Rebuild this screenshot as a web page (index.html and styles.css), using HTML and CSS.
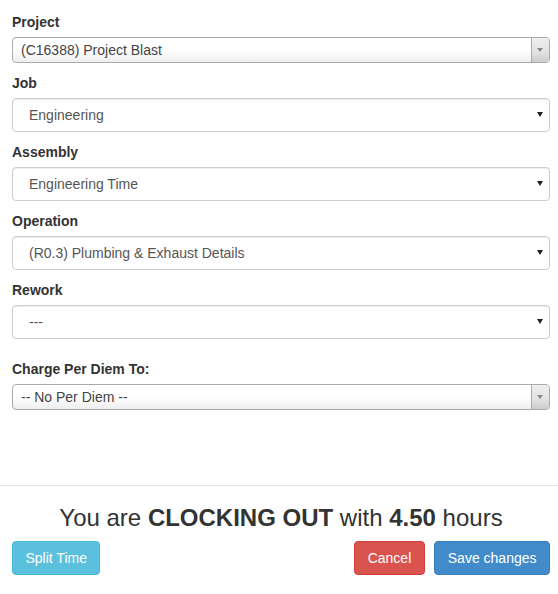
FILE: index.html
```html
<!doctype html>
<html lang="en">
  <head>
    <meta charset="utf-8">
    <title>Clock Out</title>
    <link rel="stylesheet" href="styles.css">
  </head>
  <body>
    <div class="modal-body">
      <form>
        <div class="form-group">
          <label>Project</label>
          <div class="select2">
            <span class="select2-text">(C16388) Project Blast</span>
            <span class="select2-arrow"></span>
          </div>
        </div>
        <div class="form-group">
          <label for="job">Job</label>
          <div class="select-wrap">
            <select id="job" class="form-control"><option>Engineering</option></select>
          </div>
        </div>
        <div class="form-group">
          <label for="assembly">Assembly</label>
          <div class="select-wrap">
            <select id="assembly" class="form-control"><option>Engineering Time</option></select>
          </div>
        </div>
        <div class="form-group">
          <label for="operation">Operation</label>
          <div class="select-wrap">
            <select id="operation" class="form-control"><option>(R0.3) Plumbing &amp; Exhaust Details</option></select>
          </div>
        </div>
        <div class="form-group">
          <label for="rework">Rework</label>
          <div class="select-wrap">
            <select id="rework" class="form-control"><option>---</option></select>
          </div>
        </div>
        <div class="form-group per-diem">
          <label>Charge Per Diem To:</label>
          <div class="select2">
            <span class="select2-text">-- No Per Diem --</span>
            <span class="select2-arrow"></span>
          </div>
        </div>
      </form>
    </div>
    <div class="modal-footer">
      <h3>You are <strong>CLOCKING OUT</strong> with <strong>4.50</strong> hours</h3>
      <div class="actions">
        <button class="btn btn-info">Split Time</button>
        <div class="actions-right">
          <button class="btn btn-danger">Cancel</button>
          <button class="btn btn-primary">Save changes</button>
        </div>
      </div>
    </div>
  </body>
</html>
```

FILE: styles.css
```css
* {
  box-sizing: border-box;
}

body {
  margin: 0;
  font-family: "Liberation Sans", Arial, sans-serif;
  font-size: 14px;
  line-height: 20px;
  color: #333;
  background: #fff;
}

.modal-body {
  padding: 12px 8px 65px 12px;
}

form {
  margin: 0;
}

.form-group {
  margin-bottom: 10px;
}

.form-group.per-diem {
  margin-top: 20px;
}

.form-group label {
  display: block;
  font-weight: bold;
  margin-bottom: 5px;
}

/* select2 look */
.select2 {
  display: flex;
  height: 26px;
  border: 1px solid #aaa;
  border-radius: 4px;
  background: linear-gradient(to bottom, #fff 0%, #fff 50%, #eee 100%);
  color: #444;
  line-height: 24px;
  overflow: hidden;
}

.select2-text {
  flex: 1;
  padding-left: 8px;
}

.select2-arrow {
  position: relative;
  width: 18px;
  border-left: 1px solid #aaa;
  background: linear-gradient(to bottom, #eee 0%, #e2e2e2 60%, #ccc 100%);
}

.select2-arrow::after {
  content: "";
  position: absolute;
  left: 5px;
  top: 10px;
  border-left: 3px solid transparent;
  border-right: 3px solid transparent;
  border-top: 4px solid #888;
}

/* native select */
.select-wrap {
  position: relative;
}

.select-wrap::after {
  content: "";
  position: absolute;
  right: 7px;
  top: 14px;
  border-left: 3px solid transparent;
  border-right: 3px solid transparent;
  border-top: 5px solid #222;
  pointer-events: none;
}

.form-control {
  display: block;
  width: 100%;
  height: 34px;
  padding: 6px 16px;
  font-family: inherit;
  font-size: 14px;
  line-height: 20px;
  color: #555;
  background: #fff;
  border: 1px solid #ccc;
  border-radius: 4px;
  box-shadow: inset 0 1px 1px rgba(0, 0, 0, .075);
  appearance: none;
  -webkit-appearance: none;
}

/* footer */
.modal-footer {
  border-top: 1px solid #e5e5e5;
  padding: 19px 8px 19px 12px;
}

.modal-footer h3 {
  margin: 0 0 10px;
  font-size: 24px;
  font-weight: normal;
  line-height: 26px;
  text-align: center;
  color: #333;
}

.actions {
  display: flex;
  justify-content: space-between;
}

.actions-right {
  display: flex;
  gap: 9px;
}

.btn {
  height: 34px;
  padding: 6px 12.5px;
  font-family: inherit;
  font-size: 14px;
  line-height: 20px;
  color: #fff;
  border: 1px solid transparent;
  border-radius: 4px;
  cursor: pointer;
}

.btn-danger {
  padding: 6px 13px;
}

.btn-info {
  background: #5bc0de;
  border-color: #46b8da;
}

.btn-danger {
  background: #d9534f;
  border-color: #d43f3a;
}

.btn-primary {
  background: #428bca;
  border-color: #357ebd;
}
```
